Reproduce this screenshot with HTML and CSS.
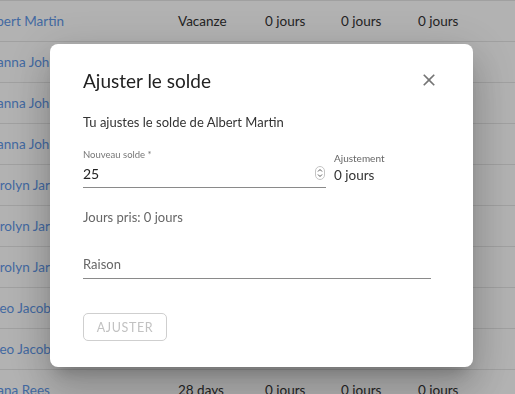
FILE: index.html
```html
<!DOCTYPE html>
<html lang="fr">
<head>
    <meta charset="UTF-8">
    <meta name="viewport" content="width=device-width, initial-scale=1.0">
    <title>Ajuster le solde</title>
    <link rel="stylesheet" href="styles.css">
</head>
<body>
    <div class="table">
        <div class="row"><span class="name">Carolyn Jarvis</span><span>Maladie</span><span>0 jours</span><span>0 jours</span><span>0 jours</span></div>
        <div class="row"><span class="name">Albert Martin</span><span>Vacanze</span><span>0 jours</span><span>0 jours</span><span>0 jours</span></div>
        <div class="row"><span class="name">Joanna Johnson</span><span>Vacanze</span><span>0 jours</span><span>0 jours</span><span>0 jours</span></div>
        <div class="row"><span class="name">Joanna Johnson</span><span>Maladie</span><span>0 jours</span><span>0 jours</span><span>0 jours</span></div>
        <div class="row"><span class="name">Joanna Johnson</span><span>28 days</span><span>0 jours</span><span>0 jours</span><span>0 jours</span></div>
        <div class="row"><span class="name">Carolyn Jarvis</span><span>Vacanze</span><span>0 jours</span><span>0 jours</span><span>0 jours</span></div>
        <div class="row"><span class="name">Carolyn Jarvis</span><span>Maladie</span><span>0 jours</span><span>0 jours</span><span>0 jours</span></div>
        <div class="row"><span class="name">Carolyn Jarvis</span><span>28 days</span><span>0 jours</span><span>0 jours</span><span>0 jours</span></div>
        <div class="row"><span class="name">Theo Jacob</span><span>Vacanze</span><span>0 jours</span><span>0 jours</span><span>0 jours</span></div>
        <div class="row"><span class="name">Theo Jacob</span><span>Maladie</span><span>0 jours</span><span>0 jours</span><span>0 jours</span></div>
        <div class="row"><span class="name">Diana Rees</span><span>28 days</span><span>0 jours</span><span>0 jours</span><span>0 jours</span></div>
    </div>

    <div class="backdrop">
        <div class="dialog">
            <div class="dialog-header">
                <h2>Ajuster le solde</h2>
                <button class="close-button" aria-label="Fermer">
                    <svg width="20" height="20" viewBox="0 0 24 24"><path d="M19 6.41 17.59 5 12 10.59 6.41 5 5 6.41 10.59 12 5 17.59 6.41 19 12 13.41 17.59 19 19 17.59 13.41 12z" fill="#757575"/></svg>
                </button>
            </div>

            <p class="intro">Tu ajustes le solde de Albert Martin</p>

            <div class="balance-row">
                <div class="field balance-field">
                    <label>Nouveau solde *</label>
                    <div class="input-line">
                        <span class="value">25</span>
                        <svg class="spinner" width="10" height="14" viewBox="0 0 10 14">
                            <rect x="0.5" y="0.5" width="9" height="13" rx="4.5" fill="none" stroke="#c4c4c4"/>
                            <path d="M3 5.5 5 3.5 7 5.5M3 8.5 5 10.5 7 8.5" fill="none" stroke="#555" stroke-width="1"/>
                        </svg>
                    </div>
                </div>
                <div class="adjustment">
                    <span class="adjustment-label">Ajustement</span>
                    <span class="adjustment-value">0 jours</span>
                </div>
            </div>

            <p class="taken">Jours pris: 0 jours</p>

            <div class="field reason-field">
                <span class="placeholder">Raison</span>
            </div>

            <button class="submit-button" disabled>Ajuster</button>
        </div>
    </div>
</body>
</html>
```

FILE: styles.css
```css
body {
    margin: 0;
    font-family: 'Lato', 'Noto Sans', sans-serif;
    background: #fff;
    overflow: hidden;
    width: 515px;
    height: 394px;
}

/* Tableau en arrière-plan */
.table {
    margin-top: -40px;
    margin-left: -16px;
}

.row {
    display: grid;
    grid-template-columns: 194px 87px 76px 77px 1fr;
    align-items: center;
    height: 40px;
    border-bottom: 1px solid #e6e6e6;
    font-size: 13.5px;
    color: #333;
    white-space: nowrap;
}

.row .name {
    color: #5f97e8;
    overflow: hidden;
}

/* Fond de la modale */
.backdrop {
    position: fixed;
    inset: 0;
    background: rgba(0, 0, 0, 0.3);
}

.dialog {
    position: absolute;
    left: 50px;
    top: 44px;
    width: 423px;
    height: 323px;
    box-sizing: border-box;
    padding: 24px 42px 0 33px;
    background: #fff;
    border-radius: 8px;
    box-shadow: 0 11px 15px -7px rgba(0, 0, 0, 0.2), 0 24px 38px 3px rgba(0, 0, 0, 0.14), 0 9px 46px 8px rgba(0, 0, 0, 0.12);
    color: #222;
}

.dialog-header {
    display: flex;
    justify-content: space-between;
    align-items: center;
    height: 24px;
}

.dialog-header h2 {
    margin: 0;
    font-size: 19px;
    font-weight: 400;
    color: #222;
}

.close-button {
    border: none;
    background: none;
    padding: 0;
    width: 24px;
    height: 24px;
    margin-right: -10px;
    display: flex;
    align-items: center;
    justify-content: center;
}

.intro {
    margin: 21px 0 0;
    font-size: 13px;
    line-height: 18px;
    color: #333;
}

.balance-row {
    display: flex;
    align-items: flex-start;
    margin-top: 17px;
}

.balance-field {
    width: 243px;
}

.field label {
    display: block;
    font-size: 9.5px;
    line-height: 14px;
    color: #777;
}

.input-line {
    display: flex;
    justify-content: space-between;
    align-items: center;
    height: 25px;
    border-bottom: 1px solid #8a8a8a;
}

.value {
    font-size: 14px;
    color: #222;
    padding-bottom: 3px;
}

.spinner {
    margin-right: 1px;
    margin-bottom: 3px;
}

.adjustment {
    display: flex;
    flex-direction: column;
    margin-left: 8px;
    padding-top: 4px;
}

.adjustment-label {
    font-size: 10px;
    line-height: 12px;
    color: #666;
}

.adjustment-value {
    margin-top: 3px;
    font-size: 13.5px;
    line-height: 16px;
    color: #333;
}

.taken {
    margin: 20px 0 0;
    font-size: 13px;
    line-height: 18px;
    color: #666;
}

.reason-field {
    margin-top: 29px;
    padding-bottom: 5px;
    border-bottom: 1px solid #8a8a8a;
}

.placeholder {
    display: block;
    font-size: 13px;
    line-height: 18px;
    color: #666;
}

.submit-button {
    margin-top: 34px;
    width: 84px;
    height: 28px;
    border: 1px solid #cfcfcf;
    border-radius: 5px;
    background: #fff;
    font-family: inherit;
    font-size: 12.5px;
    letter-spacing: 0.6px;
    text-transform: uppercase;
    color: #c2c2c2;
    padding: 0;
}
```
